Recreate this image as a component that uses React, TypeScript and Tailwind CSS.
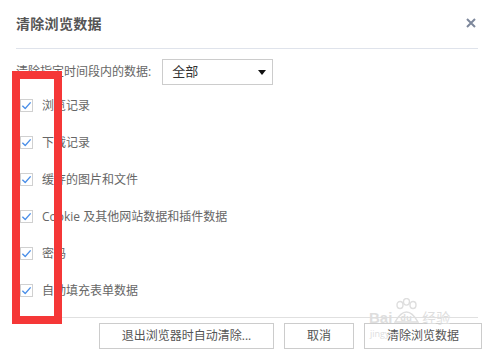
const font = { fontFamily: '"Open Sans", "Noto Sans CJK SC", sans-serif' }

const items = [
  '浏览记录',
  '下载记录',
  '缓存的图片和文件',
  'Cookie 及其他网站数据和插件数据',
  '密码',
  '自动填充表单数据',
]

function CheckBox() {
  return (
    <span className="w-[13px] h-[13px] border border-[#d0d0d0] bg-white flex items-center justify-center">
      <svg viewBox="0 0 12 12" width="11" height="11" fill="none">
        <path d="M1.5 6.2 L4.6 9.2 L10.5 2.6" stroke="#4b8fe8" strokeWidth="1.5" strokeLinejoin="round" />
      </svg>
    </span>
  )
}

export default function App() {
  return (
    <div className="relative w-[487px] h-[354px] bg-white overflow-hidden" style={font}>
      <div className="pl-4 pr-[9px]">
        <div className="h-[49px] border-b border-[#dfe3eb] flex items-center justify-between pb-[2px]">
          <span className="text-[14px] font-bold text-[#555] tracking-[0.3px]">清除浏览数据</span>
          <svg viewBox="0 0 10 10" width="10" height="10" className="mr-[2px]">
            <path d="M1 1 L9 9 M9 1 L1 9" stroke="#7d879b" strokeWidth="2" />
          </svg>
        </div>

        <div className="mt-[10px] flex items-center text-[12px] text-[#666]">
          <span>清除指定时间段内的数据:</span>
          <div className="ml-[11px] w-[111px] h-[26px] border border-[#ccc] flex items-center justify-between pl-[9px] pr-[6px] text-[13px] text-[#333]">
            <span>全部</span>
            <svg viewBox="0 0 8 5" width="8" height="5">
              <path d="M0 0 H8 L4 5 Z" fill="#111" />
            </svg>
          </div>
        </div>

        <div className="mt-[2px] flex flex-col">
          {items.map((t) => (
            <div key={t} className="h-[37px] flex items-center pl-[4px] gap-[9px] text-[12px] text-[#666]">
              <CheckBox />
              <span>{t}</span>
            </div>
          ))}
        </div>

        <div className="mt-[8px] border-t border-[#e0e0e0]" />

        <div className="mt-[5px] -mr-[4px] flex justify-end gap-[10px] text-[12px] text-[#555]">
          <button className="w-[175px] h-[26px] border border-[#ccc] bg-white">退出浏览器时自动清除...</button>
          <button className="w-[70px] h-[26px] border border-[#ccc] bg-white">取消</button>
          <button className="w-[118px] h-[26px] border border-[#ccc] bg-white">清除浏览数据</button>
        </div>
      </div>

      {/* annotation frame */}
      <div className="absolute left-[12px] top-[71px] w-[50px] h-[253px] border-[8px] border-[#f53737]" />

      {/* watermark */}
      <div className="absolute left-[369px] top-[298px] text-[#dedede] pointer-events-none select-none leading-none">
        <div className="flex items-end">
          <span className="text-[15px] font-bold mb-[-2px]" style={{ fontFamily: 'Arial, "Liberation Sans", sans-serif' }}>Bai</span>
          <span className="relative w-[27px] h-[25px] ml-[1px]">
            <svg viewBox="0 0 27 25" width="27" height="25" className="absolute inset-0">
              <ellipse cx="7" cy="7" rx="3" ry="3.5" fill="none" stroke="#dedede" strokeWidth="1.4" />
              <ellipse cx="13.5" cy="3.8" rx="3" ry="3.3" fill="none" stroke="#dedede" strokeWidth="1.4" />
              <ellipse cx="20" cy="7" rx="3" ry="3.5" fill="none" stroke="#dedede" strokeWidth="1.4" />
              <path d="M2 24 Q13.5 4 25 24 Z" fill="none" stroke="#dedede" strokeWidth="1.4" />
            </svg>
            <span className="absolute left-[7px] bottom-[1px] text-[9px] font-bold">du</span>
          </span>
          <span className="text-[14px] ml-[2px] mb-[-2px]">经验</span>
        </div>
        <div className="text-[9px] mt-[6px] ml-[1px]">jingyan</div>
      </div>
    </div>
  )
}
